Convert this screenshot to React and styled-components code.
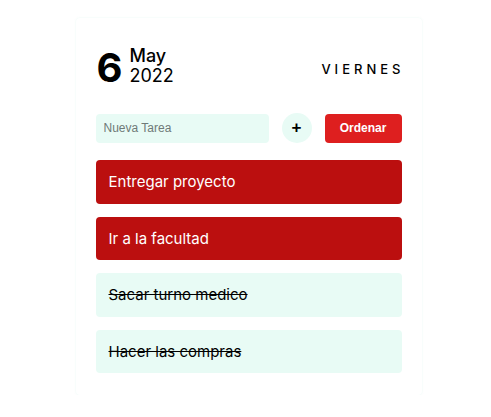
import styled, { createGlobalStyle } from "styled-components";

const tasks = [
  { name: "Entregar proyecto", done: false },
  { name: "Ir a la facultad", done: false },
  { name: "Sacar turno medico", done: true },
  { name: "Hacer las compras", done: true },
];

const GlobalStyle = createGlobalStyle`
  body {
    margin: 0;
    background: #ffffff;
    font-family: Inter, "Open Sans", sans-serif;
  }
`;

const App = () => {
  return (
    <Page>
      <GlobalStyle />
      <Card>
        <Header>
          <DateBox>
            <Day>6</Day>
            <MonthYear>
              <span>May</span>
              <span>2022</span>
            </MonthYear>
          </DateBox>
          <Weekday>VIERNES</Weekday>
        </Header>

        <Form>
          <Input placeholder="Nueva Tarea" />
          <AddButton>+</AddButton>
          <SortButton>Ordenar</SortButton>
        </Form>

        <List>
          {tasks.map((item, index) => (
            <Task key={index} $done={item.done}>
              {item.name}
            </Task>
          ))}
        </List>
      </Card>
    </Page>
  );
};

export default App;

const Page = styled.div`
  display: flex;
  justify-content: center;
  padding-top: 18px;
  padding-left: 6px;
`;

const Card = styled.div`
  width: 306px;
  padding: 26px 20px 22px;
  background: #fff;
  border-radius: 4px;
  box-shadow: 0 0 2px rgba(120, 220, 190, 0.18);
`;

const Header = styled.div`
  display: flex;
  justify-content: space-between;
  align-items: center;
  padding: 0 1px;
`;

const DateBox = styled.div`
  display: flex;
  align-items: center;
  gap: 7px;
`;

const Day = styled.div`
  font-size: 40px;
  font-weight: 700;
  color: #000;
  line-height: 1;
  margin-top: 4px;
`;

const MonthYear = styled.div`
  display: flex;
  flex-direction: column;
  font-size: 18px;
  line-height: 20px;
  color: #000;

  span:first-child {
    font-weight: 500;
  }
`;

const Weekday = styled.div`
  font-size: 13px;
  font-weight: 500;
  letter-spacing: 4px;
  color: #000;
  margin-top: 6px;
  margin-right: -4px;
`;

const Form = styled.div`
  display: flex;
  align-items: center;
  margin-top: 25px;
`;

const Input = styled.input`
  width: 173px;
  height: 29px;
  box-sizing: border-box;
  border: none;
  outline: none;
  border-radius: 4px;
  background: #e8fbf5;
  padding: 0 8px;
  font-family: "Liberation Sans", Arial, sans-serif;
  font-size: 12px;

  &::placeholder {
    color: #6f7a78;
  }
`;

const AddButton = styled.button`
  width: 30px;
  height: 30px;
  margin-left: 13px;
  border: none;
  border-radius: 50%;
  background: #e8fbf5;
  font-family: "Liberation Sans", Arial, sans-serif;
  font-size: 17px;
  font-weight: 700;
  color: #000;
  padding: 0;
`;

const SortButton = styled.button`
  width: 77px;
  height: 29px;
  margin-left: auto;
  border: none;
  border-radius: 4px;
  background: #de1f1f;
  color: #fff;
  font-family: "Liberation Sans", Arial, sans-serif;
  font-size: 12px;
  font-weight: 700;
`;

const List = styled.div`
  display: flex;
  flex-direction: column;
  gap: 13px;
  margin-top: 17px;
`;

const Task = styled.div`
  height: 43.5px;
  display: flex;
  align-items: center;
  padding: 0 13px;
  border-radius: 4px;
  font-size: 15px;
  background: ${(props) => (props.$done ? "#e8fbf5" : "#bb0f0f")};
  color: ${(props) => (props.$done ? "#000" : "#fff")};
  text-decoration: ${(props) => (props.$done ? "line-through" : "none")};
`;
